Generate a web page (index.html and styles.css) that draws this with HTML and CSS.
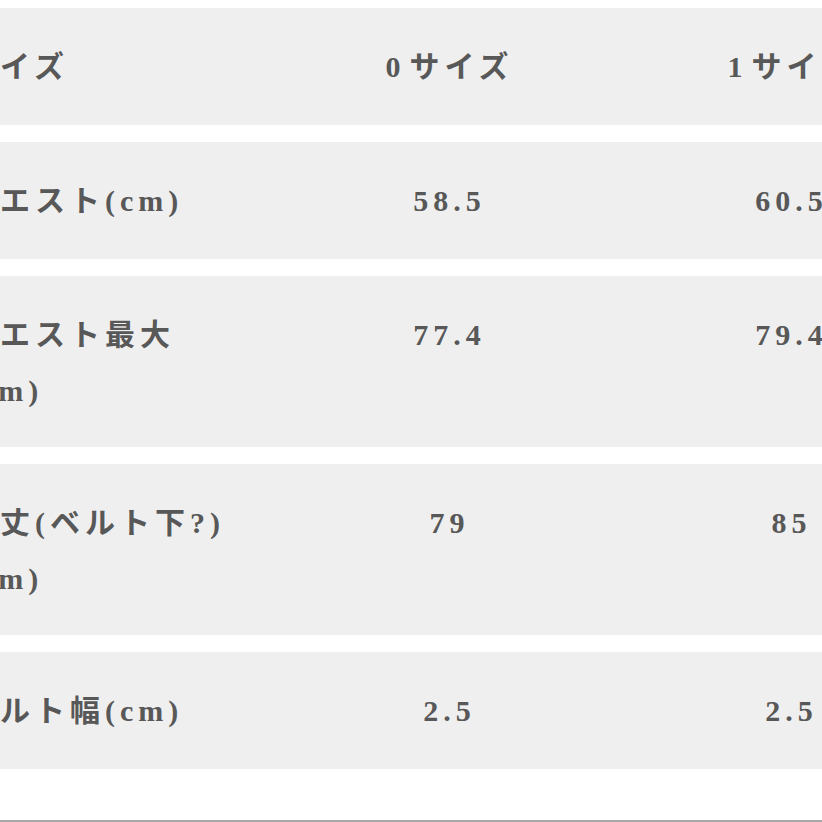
FILE: index.html
```html
<!DOCTYPE html>
<html lang="ja">
<head>
<meta charset="utf-8">
<title>サイズ表</title>
<link rel="stylesheet" href="styles.css">
</head>
<body>
<div class="page">
  <div class="table">
    <div class="row">
      <div class="cell label">サイズ</div>
      <div class="cell value"><span class="lat">0</span>サイズ</div>
      <div class="cell value"><span class="lat">1</span>サイズ</div>
    </div>
    <div class="row">
      <div class="cell label">ウエスト(cm)</div>
      <div class="cell value">58.5</div>
      <div class="cell value">60.5</div>
    </div>
    <div class="row tall">
      <div class="cell label">ウエスト最大<br>(cm)</div>
      <div class="cell value">77.4</div>
      <div class="cell value">79.4</div>
    </div>
    <div class="row tall">
      <div class="cell label">着丈(ベルト下?)<br>(cm)</div>
      <div class="cell value">79</div>
      <div class="cell value">85</div>
    </div>
    <div class="row">
      <div class="cell label">ベルト幅(cm)</div>
      <div class="cell value">2.5</div>
      <div class="cell value">2.5</div>
    </div>
  </div>
  <div class="rule"></div>
</div>
</body>
</html>
```

FILE: styles.css
```css
html, body {
  margin: 0;
  padding: 0;
  background: #ffffff;
  overflow: hidden;
}

.page {
  width: 822px;
  height: 822px;
  overflow: hidden;
  padding-top: 8px;
  box-sizing: border-box;
}

.table {
  display: flex;
  flex-direction: column;
  gap: 17px;
  width: 995px;
  margin-left: -35px;
}

.row {
  display: grid;
  grid-template-columns: 311px 342px 342px;
  align-items: start;
  background: #efefef;
  height: 117px;
  padding: 31px 0 30px;
  box-sizing: border-box;
}

.row.tall {
  height: 171px;
}

.cell {
  font-family: "Liberation Serif", "Noto Sans CJK JP", serif;
  font-weight: bold;
  font-size: 30px;
  line-height: 56px;
  letter-spacing: 5px;
  color: #585858;
  white-space: nowrap;
}

.label {
  text-align: left;
}

.value {
  text-align: center;
  padding-left: 5px;
}

.lat {
  letter-spacing: 9px;
}

.rule {
  margin-top: 51px;
  height: 2px;
  background: #a8a8a8;
}
```
